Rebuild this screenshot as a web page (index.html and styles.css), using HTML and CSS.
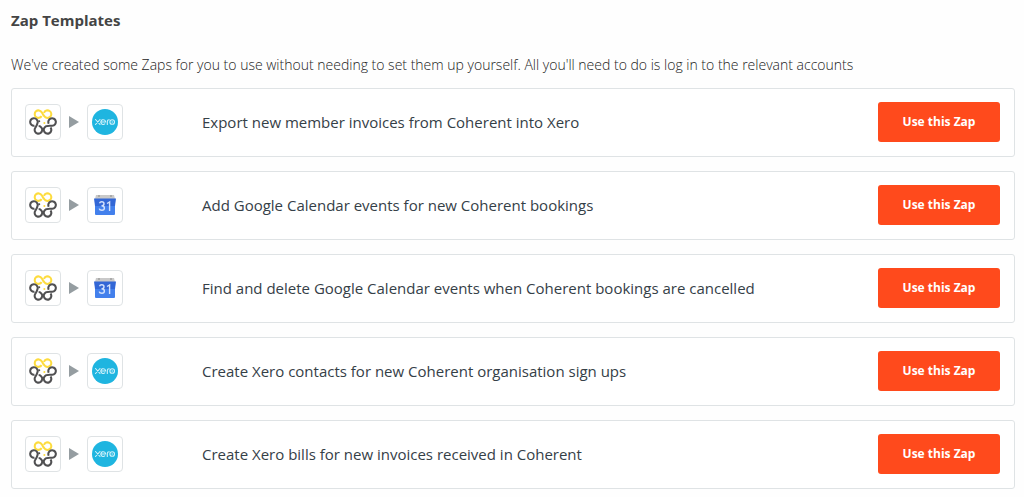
FILE: index.html
```html
<!DOCTYPE html>
<html lang="en">
<head>
    <meta charset="UTF-8">
    <meta name="viewport" content="width=device-width, initial-scale=1.0">
    <title>Zap Templates</title>
    <link rel="stylesheet" href="styles.css">
</head>
<body>
    <svg class="sprite" aria-hidden="true">
        <symbol id="coherent" viewBox="-1 -1 80 76">
            <g fill="none" stroke-width="6">
                <path stroke="#fddc3f" d="M35 20 A11 11 0 1 1 35 8 C38 12 39 17 43 20 A11 11 0 1 0 42 10"/>
                <path stroke="#505052" transform="rotate(120 39 37)" d="M35 20 A11 11 0 1 1 35 8 C38 12 39 17 43 20 A11 11 0 1 0 42 10"/>
                <path stroke="#505052" transform="rotate(240 39 37)" d="M35 20 A11 11 0 1 1 35 8 C38 12 39 17 43 20 A11 11 0 1 0 42 10"/>
            </g>
            <circle cx="28" cy="35" r="3" fill="#505052"/>
            <circle cx="43" cy="40" r="3" fill="#fddc3f"/>
        </symbol>
        <symbol id="xero" viewBox="0 0 26 26">
            <circle cx="13" cy="13" r="13" fill="#1fb5e0"/>
            <g fill="none" stroke="#d4f2fa" stroke-width="1.1" stroke-linecap="round">
                <path d="M3.5 10.5 L8 15.5 M8 10.5 L3.5 15.5"/>
                <path d="M9 13 H13.6 A2.4 2.4 0 1 0 12.8 14.9"/>
                <path d="M15.3 15.5 V12.5 Q15.3 10.7 17.2 10.7"/>
                <circle cx="20.2" cy="13" r="2.3"/>
            </g>
            <circle cx="20.2" cy="13" r=".7" fill="#d4f2fa"/>
        </symbol>
        <symbol id="calendar" viewBox="0 0 22 22">
            <path fill="#c9c9c9" d="M2 1 H20 L21 5 H1 Z"/>
            <path fill="#aaa" d="M4 1 h2 v2 h-2 z M16 1 h2 v2 h-2 z"/>
            <path fill="#3367d6" d="M0 4.5 H22 L21 12 H1 Z"/>
            <path fill="#4380ec" d="M1 12 H21 V20 Q21 21 20 21 H2 Q1 21 1 20 Z"/>
            <g fill="none" stroke="#d3e1fc" stroke-width="1.4">
                <path d="M5.5 9.2 Q6 7.8 7.7 7.8 Q10 7.8 10 9.8 Q10 11.8 7.5 11.8 Q10.4 11.8 10.4 14 Q10.4 16.3 7.9 16.3 Q5.6 16.3 5.2 14.6"/>
                <path d="M13 9.5 L15.6 8 V17"/>
            </g>
        </symbol>
    </svg>

    <main class="templates">
        <h1 class="heading">Zap Templates</h1>
        <p class="intro">We've created some Zaps for you to use without needing to set them up yourself. All you'll need to do is log in to the relevant accounts</p>

        <ul class="zaps">
            <li class="zap">
                <div class="apps">
                    <span class="app"><svg class="coherent" role="img" aria-label="Coherent"><use href="#coherent"/></svg></span>
                    <span class="arrow"></span>
                    <span class="app"><svg class="xero" role="img" aria-label="Xero"><use href="#xero"/></svg></span>
                </div>
                <h2 class="title">Export new member invoices from Coherent into Xero</h2>
                <button class="use" type="button">Use this Zap</button>
            </li>
            <li class="zap">
                <div class="apps">
                    <span class="app"><svg class="coherent" role="img" aria-label="Coherent"><use href="#coherent"/></svg></span>
                    <span class="arrow"></span>
                    <span class="app"><svg class="calendar" role="img" aria-label="Google Calendar"><use href="#calendar"/></svg></span>
                </div>
                <h2 class="title">Add Google Calendar events for new Coherent bookings</h2>
                <button class="use" type="button">Use this Zap</button>
            </li>
            <li class="zap">
                <div class="apps">
                    <span class="app"><svg class="coherent" role="img" aria-label="Coherent"><use href="#coherent"/></svg></span>
                    <span class="arrow"></span>
                    <span class="app"><svg class="calendar" role="img" aria-label="Google Calendar"><use href="#calendar"/></svg></span>
                </div>
                <h2 class="title">Find and delete Google Calendar events when Coherent bookings are cancelled</h2>
                <button class="use" type="button">Use this Zap</button>
            </li>
            <li class="zap">
                <div class="apps">
                    <span class="app"><svg class="coherent" role="img" aria-label="Coherent"><use href="#coherent"/></svg></span>
                    <span class="arrow"></span>
                    <span class="app"><svg class="xero" role="img" aria-label="Xero"><use href="#xero"/></svg></span>
                </div>
                <h2 class="title">Create Xero contacts for new Coherent organisation sign ups</h2>
                <button class="use" type="button">Use this Zap</button>
            </li>
            <li class="zap">
                <div class="apps">
                    <span class="app"><svg class="coherent" role="img" aria-label="Coherent"><use href="#coherent"/></svg></span>
                    <span class="arrow"></span>
                    <span class="app"><svg class="xero" role="img" aria-label="Xero"><use href="#xero"/></svg></span>
                </div>
                <h2 class="title">Create Xero bills for new invoices received in Coherent</h2>
                <button class="use" type="button">Use this Zap</button>
            </li>
        </ul>
    </main>
</body>
</html>
```
FILE: styles.css
```css
* {
    box-sizing: border-box;
    padding: 0;
    margin: 0;
}
body {
    background-color: #fefefe;
    color: #444;
    font-family: "Open Sans", "Noto Sans", sans-serif;
}
.sprite {
    display: none;
}
.templates {
    padding: 10px 9px 8px 11px;
}
.heading {
    font-size: 15px;
    line-height: 20px;
    font-weight: 700;
}
.intro {
    margin: 24px 0 12px;
    color: #222;
    font-size: 14px;
    line-height: 22px;
    font-weight: 300;
}
.zaps {
    display: grid;
    gap: 14px;
    list-style: none;
}
.zap {
    display: flex;
    align-items: center;
    padding: 13px 14px 14px 13px;
    border: 1px solid #dfe3e5;
    border-radius: 3px;
    background-color: #fff;
}
.apps {
    display: flex;
    align-items: center;
    width: 177px;
}
.app {
    display: flex;
    align-items: center;
    justify-content: center;
    width: 36px;
    height: 36px;
    border: 1px solid #dfe3e5;
    border-radius: 4px;
}
.coherent {
    width: 28px;
    height: 26px;
}
.xero {
    width: 26px;
    height: 26px;
}
.calendar {
    width: 22px;
    height: 22px;
}
.arrow {
    margin: 0 8px;
    border-left: 10px solid #959da1;
    border-top: 6px solid transparent;
    border-bottom: 6px solid transparent;
}
.title {
    flex: 1;
    color: #354047;
    font-size: 15px;
    line-height: 22px;
    font-weight: 400;
}
.use {
    width: 122px;
    height: 40px;
    padding-bottom: 2px;
    border: 0;
    border-radius: 3px;
    background-color: #ff4a1c;
    color: #fff;
    font-family: inherit;
    font-size: 12px;
    font-weight: 700;
    cursor: pointer;
}
```
